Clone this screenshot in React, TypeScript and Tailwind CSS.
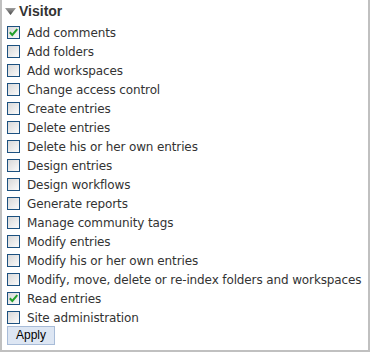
import { useState } from "react";

const permissions = [
  { label: "Add comments", checked: true },
  { label: "Add folders" },
  { label: "Add workspaces" },
  { label: "Change access control" },
  { label: "Create entries" },
  { label: "Delete entries" },
  { label: "Delete his or her own entries" },
  { label: "Design entries" },
  { label: "Design workflows" },
  { label: "Generate reports" },
  { label: "Manage community tags" },
  { label: "Modify entries" },
  { label: "Modify his or her own entries" },
  { label: "Modify, move, delete or re-index folders and workspaces" },
  { label: "Read entries", checked: true },
  { label: "Site administration" },
];

function Box({ checked, onClick }: { checked: boolean; onClick: () => void }) {
  return (
    <span
      onClick={onClick}
      className="w-[13px] h-[13px] shrink-0 border border-[#1c5180] bg-gradient-to-br from-[#d8d8d8] to-[#fbfbfb] flex items-center justify-center cursor-pointer"
    >
      {checked && (
        <svg width="11" height="11" viewBox="0 0 11 11">
          <path d="M1.8 5.3 L4.3 8 L9.3 2.2" fill="none" stroke="#22a02a" strokeWidth="2" />
        </svg>
      )}
    </span>
  );
}

export default function App() {
  const [checked, setChecked] = useState(permissions.map((p) => !!p.checked));

  return (
    <div className="w-[370px] h-[352px] bg-white border-x-2 border-b-2 border-[#c0c0c0] font-['DejaVu_Sans',sans-serif] text-[#333]">
      <div className="flex items-center gap-[3px] pl-[3px] pt-[3px] h-[20px]">
        <svg width="11" height="7" viewBox="0 0 11 7">
          <defs>
            <linearGradient id="tri" x1="0" y1="0" x2="0" y2="1">
              <stop offset="0" stopColor="#a0a0a0" />
              <stop offset="1" stopColor="#444" />
            </linearGradient>
          </defs>
          <path d="M0 0 L11 0 L5.5 7 Z" fill="url(#tri)" />
        </svg>
        <span className="font-['Liberation_Sans',sans-serif] font-bold text-[14px] text-[#333]">
          Visitor
        </span>
      </div>
      <div className="flex flex-col pl-[5px] pt-[3px]">
        {permissions.map((p, i) => (
          <label
            key={p.label}
            className="flex items-center gap-[7px] h-[19px] text-[12px] tracking-[-0.12px]"
          >
            <Box
              checked={checked[i]}
              onClick={() => setChecked(checked.map((c, j) => (j === i ? !c : c)))}
            />
            <span className="whitespace-nowrap">{p.label}</span>
          </label>
        ))}
      </div>
      <div className="pl-[5px] -mt-[5px]">
        <button className="h-[19px] w-[48px] bg-[#dde6f3] border border-[#a8bcd8] font-['Liberation_Sans',sans-serif] text-[12px] text-black leading-none">
          Apply
        </button>
      </div>
    </div>
  );
}
